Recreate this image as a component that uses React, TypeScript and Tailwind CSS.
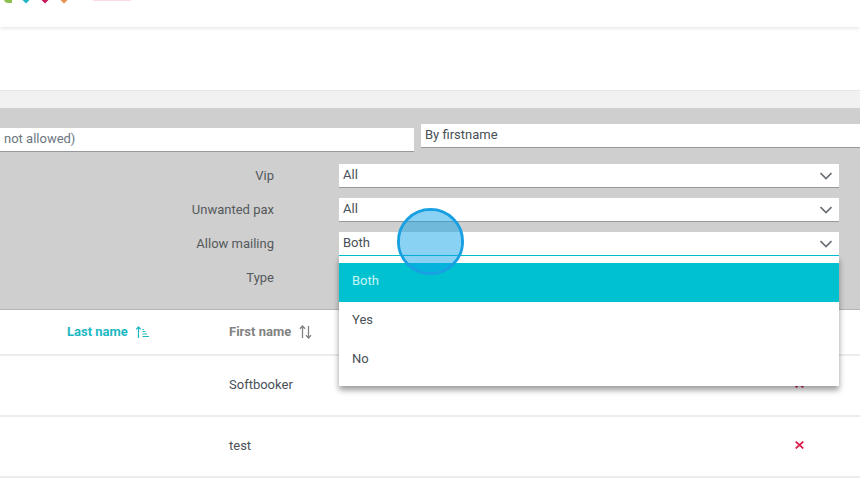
import { useState } from "react";
import clsx from "clsx";

const MAILING_OPTIONS = ["Both", "Yes", "No"];
const GUESTS = ["Softbooker", "test"];

function Chevron() {
  return (
    <svg
      className="pointer-events-none absolute top-2 right-[7px] h-2 w-3"
      viewBox="0 0 12 8"
      fill="none"
      stroke="#6b7177"
      strokeWidth="1.7"
    >
      <path d="M0.5 1L6 6.5L11.5 1" />
    </svg>
  );
}

function SortAscIcon() {
  return (
    <svg
      className="h-3 w-[13px]"
      viewBox="0 0 13 12"
      fill="none"
      stroke="currentColor"
      strokeWidth="1.2"
    >
      <path d="M2.5 12V1M0.3 3.4L2.5 1L4.7 3.4M6.5 3.5H8M6.5 5.5H9.5M6.5 8H11M6.5 10.5H13" />
    </svg>
  );
}

function SortIcon() {
  return (
    <svg
      className="h-[14px] w-[13px]"
      viewBox="0 0 13 14"
      fill="none"
      stroke="currentColor"
      strokeWidth="1.3"
    >
      <path d="M3.5 13V1M1 3.8L3.5 1L6 3.8M9.5 1V13M7 10.2L9.5 13L12 10.2" />
    </svg>
  );
}

function CrossIcon() {
  return (
    <svg className="h-2 w-[9px]" viewBox="0 0 9 8" stroke="#dc1f4e" strokeWidth="1.7">
      <path d="M0.7 0.5L8.3 7.5M8.3 0.5L0.7 7.5" />
    </svg>
  );
}

interface FilterProps {
  id: string;
  label: string;
  options: string[];
  value: string;
  onChange: (value: string) => void;
  open?: boolean;
  children?: React.ReactNode;
}

function Filter({ id, label, options, value, onChange, open, children }: FilterProps) {
  return (
    <div className="grid grid-cols-[274px_1fr] items-center gap-[65px]">
      <label htmlFor={id} className="text-right text-[#55595c]">
        {label}
      </label>
      <div className="relative">
        <select
          id={id}
          value={value}
          onChange={(e) => onChange(e.target.value)}
          className={clsx(
            "block h-6 w-full appearance-none border-b bg-white px-1 pb-0.5 text-[#495057] outline-none",
            open ? "border-[#00c1cf]" : "border-[#999]"
          )}
        >
          {options.map((option) => (
            <option key={option}>{option}</option>
          ))}
        </select>
        <Chevron />
        {children}
      </div>
    </div>
  );
}

export default function App() {
  const [vip, setVip] = useState("All");
  const [unwanted, setUnwanted] = useState("All");
  const [mailing, setMailing] = useState("Both");
  const [type, setType] = useState("All");

  return (
    <div className="min-h-screen overflow-hidden bg-white font-[Roboto,sans-serif] text-[13px] leading-5 text-[#495057]">
      <header className="h-[27px] shadow-[0_1px_4px_rgba(0,0,0,0.12)]">
        <svg className="h-1 w-36" viewBox="0 0 144 4">
          <path d="M4 0H12V3H8Q5 3 4 0Z" fill="#8cc152" />
          <path d="M22.5 0H29.5L26 3.5Z" fill="#1fb5c4" />
          <path d="M41.5 0H48.5L45 3.5Z" fill="#c9185b" />
          <path d="M60.5 0H67.5L64 3.5Z" fill="#ec8f4b" />
          <path d="M93 0H131V1H93Z" fill="#fbdde1" />
        </svg>
      </header>
      <div className="h-[63px]" />
      <div className="h-[18px] border-t border-[#e6e6e6] bg-[#f1f1f1]" />

      <section className="border-b border-[#b5b5b5] bg-[#cfcfcf] pt-4 pb-[19px]">
        <div className="grid grid-cols-[414fr_439fr] gap-[7px]">
          <input
            aria-label="Search"
            placeholder="not allowed)"
            className="mt-1 h-6 border-b border-[#999] bg-white px-1 pb-0.5 outline-none placeholder:text-[#6c757d]"
          />
          <input
            aria-label="Search mode"
            defaultValue="By firstname"
            className="h-6 border-b border-[#999] bg-white px-1 pb-0.5 outline-none"
          />
        </div>

        <div className="mt-3 flex flex-col gap-2.5 pr-[21px]">
          <Filter id="vip" label="Vip" options={["All", "Yes", "No"]} value={vip} onChange={setVip} />
          <Filter
            id="unwanted"
            label="Unwanted pax"
            options={["All", "Yes", "No"]}
            value={unwanted}
            onChange={setUnwanted}
          />
          <Filter
            id="mailing"
            label="Allow mailing"
            options={MAILING_OPTIONS}
            value={mailing}
            onChange={setMailing}
            open
          >
            <div
              role="listbox"
              aria-label="Allow mailing"
              className="absolute inset-x-0 top-full z-10 bg-white pt-[7px] pb-1.5 shadow-[0_4px_6px_rgba(0,0,0,0.4)]"
            >
              {MAILING_OPTIONS.map((option) => (
                <button
                  key={option}
                  role="option"
                  aria-selected={option === mailing}
                  onClick={() => setMailing(option)}
                  className={clsx(
                    "block h-[39px] w-full px-[13px] pb-1 text-left",
                    option === mailing ? "bg-[#00c1cf] text-[#c9f5f7]" : "text-[#495057]"
                  )}
                >
                  {option}
                </button>
              ))}
            </div>
            <div className="pointer-events-none absolute -top-6 left-[58px] z-20 size-[67px] rounded-full border-[3px] border-[#18a0e2] bg-[#0aa0e8]/48 bg-clip-padding" />
          </Filter>
          <Filter id="type" label="Type" options={["All"]} value={type} onChange={setType} />
        </div>
      </section>

      <table className="w-full table-fixed border-collapse text-left">
        <thead>
          <tr className="h-[45px] border-b-2 border-[#ececec]">
            <th className="w-[229px] pl-[67px] font-bold text-[#1bb8c3]">
              <button className="flex items-center gap-2">
                Last name <SortAscIcon />
              </button>
            </th>
            <th className="font-bold text-[#828282]">
              <button className="flex items-center gap-2">
                First name <SortIcon />
              </button>
            </th>
            <th className="w-[65px]" />
          </tr>
        </thead>
        <tbody>
          {GUESTS.map((name) => (
            <tr key={name} className="h-[61px] border-b-2 border-[#ececec]">
              <td />
              <td className="pb-0.5">{name}</td>
              <td className="pb-1">
                <CrossIcon />
              </td>
            </tr>
          ))}
        </tbody>
      </table>
    </div>
  );
}
